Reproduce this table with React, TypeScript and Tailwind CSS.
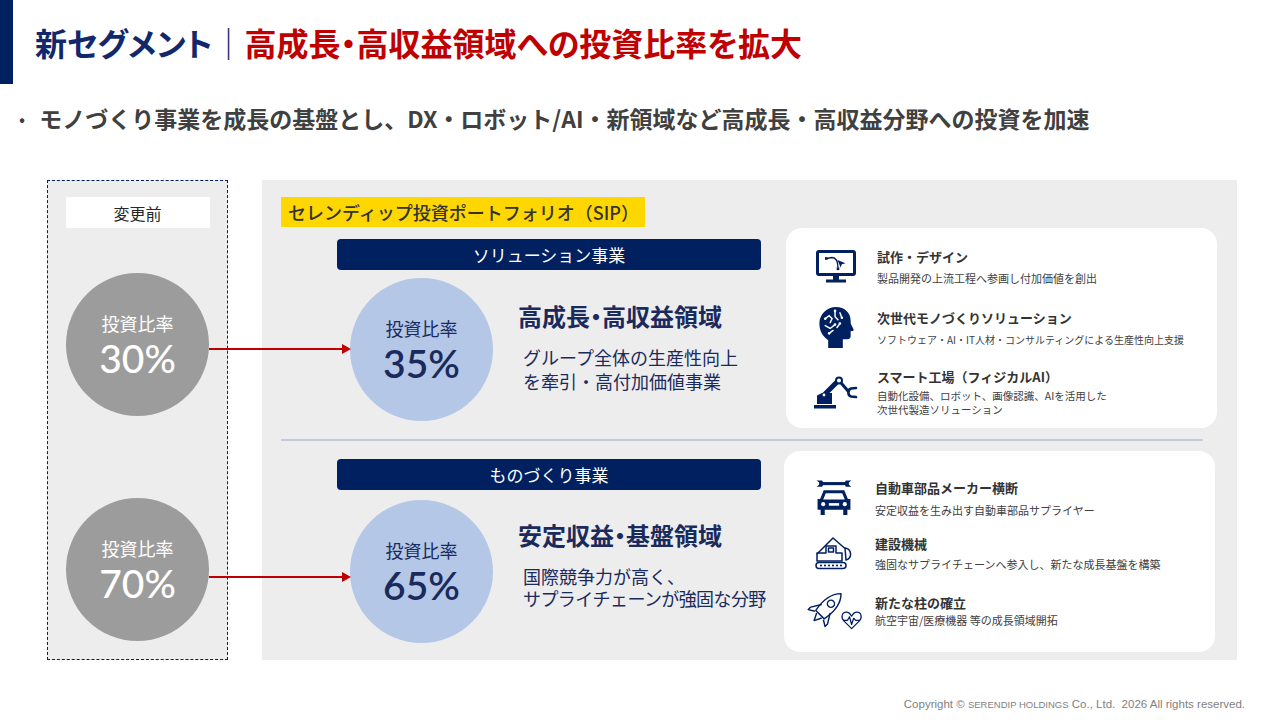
const NAVY = "#002060";

function MonitorIcon() {
  return (
    <svg width="40" height="34" viewBox="0 0 40 34">
      <rect x="1.5" y="1.5" width="37" height="23" rx="1.5" fill="none" stroke={NAVY} strokeWidth="3" />
      <rect x="17" y="25" width="6" height="5" fill={NAVY} />
      <rect x="10" y="29.5" width="20" height="3" fill={NAVY} />
      <path d="M10.5 8.5 L16 7.5 C20.5 7.5 22 12 22 18.5" fill="none" stroke={NAVY} strokeWidth="1.3" />
      <rect x="9" y="7.2" width="2.6" height="2.6" fill={NAVY} />
      <rect x="20.7" y="17.5" width="2.6" height="2.6" fill={NAVY} />
      <path d="M21.5 10 L29.5 13.2 L25.8 14.2 L24.6 17.6 Z" fill={NAVY} />
    </svg>
  );
}

function HeadIcon() {
  return (
    <svg width="36" height="43" viewBox="0 0 36 44">
      <path
        d="M10 43 L10 35 C4 31 1 25 1 18 C1 8 9 1 18 1 C27 1 33 7 33 15 C33 17 33 18 34 20 L35.8 23.5 C36.3 24.6 35.8 25.6 34.6 25.6 L33 25.6 L33 31 C33 33 31.5 34 29.5 34 L25 34 L25 43 Z"
        fill={NAVY}
      />
      <g fill="none" stroke="#fff" strokeWidth="1.5" strokeLinecap="round">
        <path d="M7 13 L11 10 L14 13 L12 17" />
        <path d="M17 5 L17 11 L20 14" />
        <path d="M22 7 L24 12" />
        <path d="M7 20 L12 23 L17 19" />
        <path d="M11 28 L15 25" />
        <path d="M19 22 L22 18" />
      </g>
      <g fill="#fff">
        <circle cx="7" cy="13" r="1.3" />
        <circle cx="17" cy="5" r="1.3" />
        <circle cx="24" cy="12" r="1.3" />
        <circle cx="17" cy="19" r="1.3" />
        <circle cx="11" cy="28" r="1.3" />
        <circle cx="22" cy="18" r="1.3" />
      </g>
    </svg>
  );
}

function RobotArmIcon() {
  return (
    <svg width="44" height="33" viewBox="0 0 44 33">
      <rect x="0" y="29" width="22" height="3.5" fill={NAVY} />
      <path d="M3 28 L3 19.5 L8 17 L18 17 L18 28 Z" fill={NAVY} />
      <line x1="10" y1="19" x2="24" y2="5" stroke={NAVY} strokeWidth="5" strokeLinecap="round" />
      <line x1="25" y1="4.5" x2="34" y2="15" stroke={NAVY} strokeWidth="3" strokeLinecap="round" />
      <circle cx="25" cy="4.5" r="3" fill="#fff" stroke={NAVY} strokeWidth="2" />
      <circle cx="10" cy="19" r="1.4" fill="#fff" />
      <path d="M42 12 L37 12.5 C33.5 13.5 33.5 19.5 37 20.5 L42 21" fill="none" stroke={NAVY} strokeWidth="2.6" strokeLinecap="round" />
    </svg>
  );
}

function CarIcon() {
  return (
    <svg width="38" height="37" viewBox="0 0 36 36">
      <rect x="6" y="2" width="24" height="3" fill={NAVY} />
      <path d="M1 0.5 L6.5 0.5 L8 3.5 L6.5 6.5 L1 6.5 L3.5 4.5 L3.5 2.5 Z" fill={NAVY} />
      <path d="M35 0.5 L29.5 0.5 L28 3.5 L29.5 6.5 L35 6.5 L32.5 4.5 L32.5 2.5 Z" fill={NAVY} />
      <path d="M8 10 L28 10 L31.5 18.5 L34 18.5 L34 29 L31 29 L31 34 L27 34 L27 29 L9 29 L9 34 L5 34 L5 29 L2 29 L2 18.5 L4.5 18.5 Z" fill={NAVY} />
      <path d="M10 13 L26 13 L28.5 19 L7.5 19 Z" fill="#fff" />
      <circle cx="7.5" cy="23.5" r="2" fill="#fff" />
      <circle cx="28.5" cy="23.5" r="2" fill="#fff" />
      <rect x="13" y="22.5" width="10" height="2.5" fill="#fff" />
    </svg>
  );
}

function ExcavatorIcon() {
  return (
    <svg width="40" height="34" viewBox="0 0 40 34">
      <g fill="none" stroke={NAVY} strokeWidth="1.5" strokeLinejoin="round">
        <path d="M3 18 L19 2 L31 12.5" />
        <path d="M31 12 C38 13 38.5 22.5 32 24 Z" />
        <path d="M3 25 L3 17 L12 17 L12 10 L22 10 L22 17 L28 17 L28 25 Z" />
        <rect x="14.5" y="12" width="5" height="4" />
        <rect x="2" y="26.5" width="30" height="6" rx="3" />
      </g>
      <g fill={NAVY}>
        <circle cx="7" cy="29.5" r="1.1" />
        <circle cx="11" cy="29.5" r="1.1" />
        <circle cx="15" cy="29.5" r="1.1" />
        <circle cx="19" cy="29.5" r="1.1" />
        <circle cx="23" cy="29.5" r="1.1" />
        <circle cx="27" cy="29.5" r="1.1" />
      </g>
    </svg>
  );
}

function RocketHeartIcon() {
  return (
    <svg width="58" height="42" viewBox="0 0 56 40">
      <g fill="none" stroke={NAVY} strokeWidth="1.2" strokeLinejoin="round">
        <g transform="translate(21 18) rotate(45) scale(1.15)">
          <path d="M0 -17 C6 -11 7 -2 5 8 L-5 8 C-7 -2 -6 -11 0 -17 Z" />
          <circle cx="0" cy="-5" r="3" />
          <path d="M-5 1 L-10 9 L-10 12 L-5 9" />
          <path d="M5 1 L10 9 L10 12 L5 9" />
          <path d="M-3 9 L0 15 L3 9" />
        </g>
        <path d="M45 38 L37.5 30.5 C34.5 27.5 35.5 22 39.8 22 C42.2 22 44 24 45 26 C46 24 47.8 22 50.2 22 C54.5 22 55.5 27.5 52.5 30.5 Z" />
        <path d="M37 30 L41 30 L43 26.5 L45 34 L47 28 L49 30 L53 30" />
      </g>
    </svg>
  );
}

type Item = {
  icon: React.ReactNode;
  title: string;
  sub: string[];
  subSize: string;
  mt: number;
  gap: number;
};

function InfoCard({ items, pt, ml, h }: { items: Item[]; pt: string; ml: string; h: string }) {
  return (
    <div className={`bg-white rounded-[16px] w-[431px] ${h} ${ml} ${pt} flex flex-col`}>
      {items.map((it) => (
        <div key={it.title} className="flex items-center" style={{ marginTop: it.mt }}>
          <div className="w-[96px] flex justify-center pl-[4px]">{it.icon}</div>
          <div className="-ml-[5px]">
            <p className="text-[13px] leading-[18px] font-bold text-[#333333]">{it.title}</p>
            <div style={{ marginTop: it.gap }}>
              {it.sub.map((s) => (
                <p key={s} className={`${it.subSize} leading-[14px] text-[#404040] whitespace-nowrap`}>{s}</p>
              ))}
            </div>
          </div>
        </div>
      ))}
    </div>
  );
}

function GrayCircle({ value }: { value: string }) {
  return (
    <div className="w-[143px] h-[143px] rounded-full bg-[#9c9c9c] flex flex-col items-center justify-center text-white">
      <span className="text-[18px] leading-[26px]">投資比率</span>
      <span className="text-[39px] leading-[44px] font-medium font-['Lato',sans-serif]">{value}</span>
    </div>
  );
}

function BlueCircle({ value }: { value: string }) {
  return (
    <div className="w-[143px] h-[143px] rounded-full bg-[#b4c7e7] flex flex-col items-center justify-center text-[#1b2a5c]">
      <span className="text-[18px] leading-[26px]">投資比率</span>
      <span className="text-[39px] leading-[44px] font-semibold font-['Lato',sans-serif]">{value}</span>
    </div>
  );
}

function NavyBar({ label }: { label: string }) {
  return (
    <div className="h-[31px] rounded-[4px] bg-[#002060] flex items-center justify-center text-white text-[17px]">
      {label}
    </div>
  );
}

function Arrow({ top }: { top: string }) {
  return (
    <div className={`absolute left-[209px] ${top} w-[142px] h-[10px] flex items-center`}>
      <div className="flex-1 h-[2px] bg-[#c00000]" />
      <div className="w-0 h-0 border-y-[5px] border-y-transparent border-l-[9px] border-l-[#c00000]" />
    </div>
  );
}

const topItems: Item[] = [
  { icon: <MonitorIcon />, title: "試作・デザイン", sub: ["製品開発の上流工程へ参画し付加価値を創出"], subSize: "text-[11px]", mt: 0, gap: 5 },
  { icon: <HeadIcon />, title: "次世代モノづくりソリューション", sub: ["ソフトウェア・AI・IT人材・コンサルティングによる生産性向上支援"], subSize: "text-[10px]", mt: 21, gap: 6 },
  { icon: <RobotArmIcon />, title: "スマート工場（フィジカルAI）", sub: ["自動化設備、ロボット、画像認識、AIを活用した", "次世代製造ソリューション"], subSize: "text-[10.5px]", mt: 19, gap: 3 },
];

const bottomItems: Item[] = [
  { icon: <CarIcon />, title: "自動車部品メーカー横断", sub: ["安定収益を生み出す自動車部品サプライヤー"], subSize: "text-[11px]", mt: 0, gap: 6 },
  { icon: <ExcavatorIcon />, title: "建設機械", sub: ["強固なサプライチェーンへ参入し、新たな成長基盤を構築"], subSize: "text-[11px]", mt: 18, gap: 4 },
  { icon: <RocketHeartIcon />, title: "新たな柱の確立", sub: ["航空宇宙/医療機器 等の成長領域開拓"], subSize: "text-[11px]", mt: 18, gap: 1 },
];

export default function App() {
  return (
    <div className="relative w-[1280px] h-[720px] bg-white overflow-hidden font-['Noto_Sans_CJK_JP','Noto_Sans',sans-serif]">
      {/* header */}
      <div className="flex h-[84px]">
        <div className="w-[13px] bg-[#002060]" />
        <h1 className="pl-[22px] flex items-center text-[32px] font-bold leading-none [font-feature-settings:'palt']">
          <span className="text-[#12286b]">新セグメント</span>
          <span className="text-[#12286b] font-normal">｜</span>
          <span className="text-[#c00000]">高成長・高収益領域への投資比率を拡大</span>
        </h1>
      </div>

      <p className="mt-[19px] pl-[19px] flex items-center text-[23px] leading-[30px] font-bold text-[#404040] whitespace-nowrap">
        <span className="mr-[14px] text-[18px] font-normal">•</span>
        モノづくり事業を成長の基盤とし、DX・ロボット/AI・新領域など高成長・高収益分野への投資を加速
      </p>

      {/* main */}
      <div className="flex mt-[47px] ml-[47px]">
        <div className="w-[181px] h-[480px] bg-[#ededed] border border-dashed border-[#002060] flex flex-col items-center">
          <div className="mt-[16px] w-[144px] h-[31px] bg-white flex items-center justify-center text-[16px] text-[#262626]">
            変更前
          </div>
          <div className="mt-[45px]">
            <GrayCircle value="30%" />
          </div>
          <div className="mt-[82px]">
            <GrayCircle value="70%" />
          </div>
        </div>

        <div className="ml-[34px] w-[975px] h-[480px] bg-[#ededed] pt-[17px] pl-[19px]">
          <div className="w-[364px] h-[30px] bg-[#ffd700] flex items-center pl-[7px] text-[18px] font-medium text-[#333333] whitespace-nowrap">
            セレンディップ投資ポートフォリオ（SIP）
          </div>

          <div className="flex mt-[1px]">
            <div className="ml-[56px] w-[424px] pt-[11px]">
              <NavyBar label="ソリューション事業" />
              <div className="flex mt-[8px]">
                <div className="ml-[13px]">
                  <BlueCircle value="35%" />
                </div>
                <div className="ml-[25px] pt-[22px] text-[#1b2a5c] whitespace-nowrap">
                  <p className="text-[24px] leading-[32px] font-bold [font-feature-settings:'palt']">高成長・高収益領域</p>
                  <div className="mt-[13px] ml-[5px] text-[18px] leading-[24px]">
                    <p>グループ全体の生産性向上</p>
                    <p>を牽引・高付加価値事業</p>
                  </div>
                </div>
              </div>
            </div>
            <InfoCard items={topItems} pt="pt-[20px]" ml="ml-[25px]" h="h-[200px]" />
          </div>

          <div className="mt-[11px] w-[922px] h-[2px] bg-[#c5cbdc]" />

          <div className="flex mt-[10px]">
            <div className="ml-[56px] w-[424px] pt-[8px]">
              <NavyBar label="ものづくり事業" />
              <div className="flex mt-[10px]">
                <div className="ml-[13px]">
                  <BlueCircle value="65%" />
                </div>
                <div className="ml-[25px] pt-[19px] text-[#1b2a5c] whitespace-nowrap">
                  <p className="text-[24px] leading-[32px] font-bold [font-feature-settings:'palt']">安定収益・基盤領域</p>
                  <div className="mt-[14px] ml-[5px] text-[18px] leading-[22px]">
                    <p>国際競争力が高く、</p>
                    <p className="tracking-[-0.6px]">サプライチェーンが強固な分野</p>
                  </div>
                </div>
              </div>
            </div>
            <InfoCard items={bottomItems} pt="pt-[28px]" ml="ml-[23px]" h="h-[201px]" />
          </div>
        </div>
      </div>

      <Arrow top="top-[344px]" />
      <Arrow top="top-[572px]" />

      <p className="absolute right-[35px] bottom-[7px] text-[11.5px] text-[#7f7f7f] font-['Liberation_Sans',sans-serif]">
        Copyright © <span className="text-[9.5px]">SERENDIP HOLDINGS</span> Co., Ltd.&nbsp; 2026 All rights reserved.
      </p>
    </div>
  );
}
